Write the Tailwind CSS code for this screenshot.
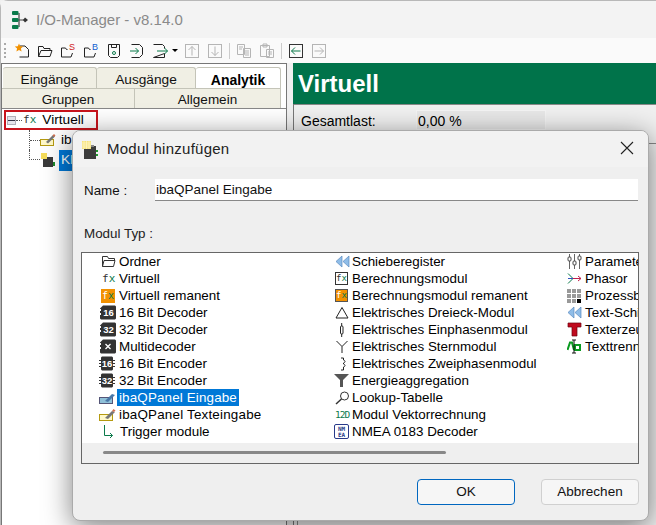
<!DOCTYPE html>
<html>
<head>
  <meta charset="UTF-8" />
  <meta name="viewport" content="width=device-width, initial-scale=1.0" />
  <script src="https://cdn.jsdelivr.net/npm/@tailwindcss/browser@4"></script>
  <title>I/O-Manager</title>
</head>
<body class="relative w-[656px] h-[525px] overflow-hidden bg-[#f0f0f0] font-['Liberation_Sans',sans-serif] text-[13.4px] text-black">

  <!-- main window -->
  <div class="h-[525px] flex flex-col border-l border-t border-[#b8b8b8] rounded-tl-lg">
    <div class="h-[37px] pt-[1px] flex items-center gap-[7px] pl-[11px] bg-[#f3f3f3]">
      <svg width="17" height="18" viewBox="0 0 17 18" fill="none">
        <path d="M7 2v14M6 9h8" stroke="#444" stroke-width="1.2"/>
        <rect x="0" y="0" width="6.500" height="4" rx="1" fill="#0b7a4b"/><rect x="0" y="7" width="6.500" height="4" rx="1" fill="#0b7a4b"/><rect x="0" y="14" width="6.500" height="4" rx="1" fill="#0b7a4b"/>
        <path d="M13 6.500l3 2.500-3 2.500-2-2.500z" fill="#333"/>
      </svg>
      <span class="text-[15px] text-[#8a8a8a]">I/O-Manager - v8.14.0</span>
    </div>

    <!-- toolbar -->
    <div class="h-[25px] flex items-center pl-[3px] gap-[7px] bg-[#fafafa]">
      <div class="h-[15px] w-[2px] border-l-2 border-dotted border-[#aaa] mr-px"></div>
      <svg width="16" height="16" viewBox="0 0 16 16" fill="none"><path d="M6 3h5l3.500 3.500V14H5.500" stroke="#222"/><path d="M5 0.500l1.200 2.800 3 .2-2.300 2 .7 3L5 7 2.400 8.500l.7-3-2.300-2 3-.2z" fill="#f29100"/></svg>
      <svg width="16" height="16" viewBox="0 0 16 16" fill="none"><path d="M1.500 13.500V3.500h4.500l1 2h6v2M1.500 13.500h11.500l2-6H4z" stroke="#222"/></svg>
      <svg width="16" height="16" viewBox="0 0 16 16" fill="none"><path d="M1.500 14V5h4l1 1.500h1M1.500 14H11l1.500-4" stroke="#222"/><text x="9" y="7" font-size="9" fill="#d01818" font-family="Liberation Sans">S</text></svg>
      <svg width="16" height="16" viewBox="0 0 16 16" fill="none"><path d="M1.500 14V5h4l1 1.500h1M1.500 14H11l1.500-4" stroke="#222"/><text x="9" y="7" font-size="9" fill="#1060d0" font-family="Liberation Sans">B</text></svg>
      <svg width="16" height="16" viewBox="0 0 16 16" fill="none"><path d="M2.500 1.500h11v11l-2 2h-7l-2-2z" stroke="#222"/><path d="M5.500 1.500v3h5v-3" stroke="#222"/><circle cx="8" cy="10" r="1.500" stroke="#0b7a4b"/></svg>
      <svg width="16" height="16" viewBox="0 0 16 16" fill="none"><path d="M2.500 1.500h8l3 3v7l-3 3h-8" stroke="#222"/><path d="M1 8h8.500M6.500 5l3 3-3 3" stroke="#0b7a4b"/></svg>
      <div class="flex items-center gap-[4px] -mr-px">
        <svg width="16" height="16" viewBox="0 0 16 16" fill="none"><path d="M1.500 1.500h9l2 2v2M12.500 10.500v4h-11z" stroke="#222"/><path d="M5 8h10.500M12.500 5l3 3-3 3" stroke="#0b7a4b"/></svg>
        <div class="w-0 h-0 border-x-[3px] border-x-transparent border-t-[3px] border-t-black"></div>
      </div>
      <svg width="16" height="16" viewBox="0 0 16 16" fill="none"><rect x="1.500" y="1.500" width="13" height="13" stroke="#b5b5b5"/><path d="M8 12.500v-9M4.500 7l3.500-3.500L11.500 7" stroke="#b5b5b5"/></svg>
      <svg width="16" height="16" viewBox="0 0 16 16" fill="none"><rect x="1.500" y="1.500" width="13" height="13" stroke="#b5b5b5"/><path d="M8 3.500v9M4.500 9L8 12.500 11.500 9" stroke="#b5b5b5"/></svg>
      <div class="w-px h-[16px] -mx-px bg-[#ccc]"></div>
      <svg width="16" height="16" viewBox="0 0 16 16" fill="none"><path d="M1.500 1.500h7v10h-7zM7.500 5.500h7v9h-7zM9 8h4M9 10h4M9 12h4M3 4h4M3 6h3" stroke="#b5b5b5"/></svg>
      <svg width="16" height="16" viewBox="0 0 16 16" fill="none"><path d="M1.500 2.500h9v11h-9zM4 1h4v3H4zM7.500 6.500h7v8h-7zM9 9h4M9 11h4" stroke="#b5b5b5"/></svg>
      <div class="w-px h-[16px] -mx-px bg-[#ccc]"></div>
      <svg width="16" height="16" viewBox="0 0 16 16" fill="none"><rect x="1.500" y="1.500" width="13" height="13" stroke="#333"/><path d="M12.500 8h-9M7 4.500L3.500 8 7 11.500" stroke="#0b7a4b"/></svg>
      <svg width="16" height="16" viewBox="0 0 16 16" fill="none"><rect x="1.500" y="1.500" width="13" height="13" stroke="#b5b5b5"/><path d="M3.500 8h9M9 4.500L12.500 8 9 11.500" stroke="#b5b5b5"/></svg>
    </div>

    <!-- panels -->
    <div class="flex-1 flex">
      <div class="w-[286px] bg-white border-l border-r border-t border-[#777]">
        <div class="w-[279px] bg-[#f0efe4]">
          <div class="h-[24px] flex pt-[3px] bg-white">
            <div class="w-[94px] ml-px pt-[4px] flex items-center justify-center bg-[#f0efe4] border-t border-r border-[#c4c4b8] rounded-t-[3px] text-[13.7px] text-[#111]">Eingänge</div>
            <div class="w-[99px] pt-[4px] flex items-center justify-center bg-[#f0efe4] border-t border-r border-[#c4c4b8] rounded-t-[3px] text-[13.7px] text-[#111]">Ausgänge</div>
            <div class="w-[85px] pt-[4px] flex items-center justify-center bg-white border-t border-r border-[#c4c4b8] rounded-t-[3px] text-[14px] font-bold">Analytik</div>
          </div>
          <div class="h-[20px] flex border-t border-[#c4c4b8]">
            <div class="w-[133px] pt-[3px] flex items-center justify-center border-r border-[#c4c4b8] text-[13.5px] text-[#111]">Gruppen</div>
            <div class="flex-1 pt-[3px] flex items-center justify-center border-r border-[#c4c4b8] text-[13.5px] text-[#111]">Allgemein</div>
          </div>
        </div>
        <div class="border-t border-[#888] w-[284px]">
          <!-- tree -->
          <div class="ml-[2px] mt-[1px] w-[94px] h-[20px] flex items-center gap-[6px] pl-[1px] border-2 border-[#c8141c]">
            <div class="flex items-center">
              <div class="w-[9px] h-[9px] bg-[#e4e4ea] border border-[#b0b0b8] flex items-center"><div class="w-[7px] h-px bg-[#334]"></div></div>
              <div class="w-[6px] border-t border-dotted border-[#555]"></div>
              <span class="ml-[1px] text-[11px] font-['DejaVu_Sans_Mono',monospace]"><span class="text-[#333]">f</span><span class="text-[#0b7a4b]">x</span></span>
            </div>
            <span class="text-[13.7px]">Virtuell</span>
          </div>
          <div class="ml-[27px] h-[20px] flex items-center">
            <div class="h-full w-[11px] flex items-center border-l border-dotted border-[#555]"><div class="w-full border-t border-dotted border-[#555]"></div></div>
            <svg width="16" height="14" viewBox="0 0 16 14" fill="none"><rect x="0.500" y="6.500" width="13" height="6" fill="#fff8c8" stroke="#b59a10"/><path d="M6 9l7-7 2 1.500-7 7z" fill="#777"/><path d="M12.500 2.500l1.500-1.500 1.500 1.500-1.500 1.500z" fill="#d07050"/></svg>
            <span class="ml-[5px] text-[13.7px]">iba</span>
          </div>
          <div class="ml-[27px] h-[20px] flex items-center">
            <div class="self-start w-[11px] h-[10px] border-l border-b border-dotted border-[#555]"></div>
            <svg width="16" height="16" viewBox="0 0 16 16"><rect x="3" y="5" width="10" height="10" fill="#3a3a3a"/><rect x="1" y="1" width="6" height="6" fill="#f5dc5a"/><rect x="13" y="10" width="2" height="4" fill="#1a8a2a"/></svg>
            <span class="ml-[3px] h-[21px] px-[2px] flex items-center bg-[#0078d7] text-white text-[13.7px]">Kl</span>
          </div>
        </div>
      </div>

      <div class="w-[6px] bg-[#f0f0f0]"></div>

      <div class="flex-1 flex flex-col border-l border-[#777]">
        <div class="h-[41px] -ml-px flex items-center pl-[5px] bg-[#00734a] text-white text-[24px] font-bold">Virtuell</div>
        <div class="h-[39px] flex items-start pt-[5px] pl-[7px] bg-[#f0f0f0] border-t border-[#888]">
          <span class="w-[115px] h-[20px] pt-[2px] flex items-center text-[14px]">Gesamtlast:</span>
          <span class="w-[130px] h-[20px] pt-[2px] pl-px flex items-center bg-[#e8e8e8] border border-[#f4f4f4] text-[14px]">0,00 %</span>
        </div>
        <div class="flex-1 ml-[3px] border-l border-t border-[#888]"></div>
      </div>
    </div>
  </div>

  <!-- dialog -->
  <div class="absolute left-[72px] top-[130px] w-[577px] h-[391px] flex flex-col bg-[#efefef] border border-[#aaa] rounded-lg shadow-[0_6px_28px_rgba(0,0,0,0.5)] overflow-hidden">
    <div class="h-[36px] pt-[1px] flex items-center pl-[8px] pr-[14px] bg-[#f2f2f2]">
      <svg width="18" height="20" viewBox="0 0 18 20">
        <rect x="3" y="6" width="12" height="13" fill="#3c3c3c"/>
        <rect x="1" y="1" width="9" height="8" fill="#f6e27a"/>
        <path d="M1 3h9M1 5h9M1 7h9M3 1v8M5.500 1v8M8 1v8" stroke="#fff7c8" stroke-width="0.700"/>
        <rect x="10" y="5" width="3" height="2" fill="#888"/>
        <rect x="15" y="10" width="2" height="2" fill="#1f9a2e"/><rect x="15" y="14" width="2" height="2" fill="#1f9a2e"/>
      </svg>
      <span class="ml-[8px] text-[15px] text-[#222] tracking-[0.25px]">Modul hinzufügen</span>
      <svg class="ml-auto -mt-[3px]" width="14" height="14" viewBox="0 0 14 14" fill="none"><path d="M1 1l12 12M13 1L1 13" stroke="#222" stroke-width="1.100"/></svg>
    </div>

    <div class="flex-1 flex flex-col pl-[8px] pr-[9px]">
      <div class="mt-[12px] h-[22px] flex items-center">
        <span class="w-[74px] pt-[2px] pl-[3px] text-[13.4px] text-[#111]">Name :</span>
        <div class="flex-1 mr-[1px] h-[22px] pt-[2px] pl-[1px] flex items-center bg-white border-b border-[#888] text-[13.5px] text-[#111]">ibaQPanel Eingabe</div>
      </div>

      <div class="mt-[26px] pl-[3px] h-[15px] flex items-center text-[13.4px] text-[#222]">Modul Typ :</div>

      <!-- module list -->
      <div class="mt-[10px] h-[212px] flex flex-col border border-[#666] bg-white overflow-hidden">
        <div class="flex-1 flex">
          <ul class="w-[234px] pl-[19px] leading-[17px]">
            <li class="h-[17px] flex items-center"><span class="w-[18px] flex justify-start"><svg width="15" height="13" viewBox="0 0 15 13" fill="none"><path d="M1.500 11.500V1.500h5l1 2h6v2M1.500 11.500h11l1.500-6H3z" stroke="#333"/></svg></span><span>Ordner</span></li>
            <li class="h-[17px] flex items-center"><span class="w-[18px] text-[11px] font-['DejaVu_Sans_Mono',monospace] pl-[1px]"><span class="text-[#333]">f</span><span class="text-[#0b7a4b]">x</span></span><span>Virtuell</span></li>
            <li class="h-[17px] flex items-center"><span class="w-[18px]"><span class="w-[14px] h-[14px] flex items-center justify-center bg-[#f29100] text-[10px] font-['DejaVu_Sans_Mono',monospace]"><span class="text-white">f</span><span class="text-[#0b7a4b]">x</span></span></span><span>Virtuell remanent</span></li>
            <li class="h-[17px] flex items-center"><span class="w-[18px]"><svg class="-ml-px" width="16" height="15" viewBox="0 0 16 15"><path d="M3 0.500h12l1 1v12l-1 1H1l-1-1V10h1V8H0V6h1V4H0V3.500z" fill="#333"/><text x="8.500" y="11" text-anchor="middle" font-size="9.500" font-weight="bold" fill="#fff" font-family="Liberation Sans">16</text></svg></span><span>16 Bit Decoder</span></li>
            <li class="h-[17px] flex items-center"><span class="w-[18px]"><svg class="-ml-px" width="16" height="15" viewBox="0 0 16 15"><path d="M3 0.500h12l1 1v12l-1 1H1l-1-1V10h1V8H0V6h1V4H0V3.500z" fill="#333"/><text x="8.500" y="11" text-anchor="middle" font-size="9.500" font-weight="bold" fill="#fff" font-family="Liberation Sans">32</text></svg></span><span>32 Bit Decoder</span></li>
            <li class="h-[17px] flex items-center"><span class="w-[18px]"><svg class="-ml-px" width="16" height="15" viewBox="0 0 16 15" fill="none"><path d="M3 0.500h12l1 1v12l-1 1H1l-1-1V10h1V8H0V6h1V4H0V3.500z" fill="#333"/><path d="M5.500 5l5 5M10.500 5l-5 5" stroke="#fff" stroke-width="1.300"/></svg></span><span>Multidecoder</span></li>
            <li class="h-[17px] flex items-center"><span class="w-[18px]"><svg class="-ml-[2px]" width="16" height="15" viewBox="0 0 16 15"><path d="M3 0.500h10l1 1V4h2v1h-2v2h2v1h-2v2h2v1h-2v2.500l-1 1H3l-1-1V11H0v-1h2V8H0V7h2V5H0V4h2V1.500z" fill="#333"/><text x="8" y="11" text-anchor="middle" font-size="9.500" font-weight="bold" fill="#fff" font-family="Liberation Sans">16</text></svg></span><span>16 Bit Encoder</span></li>
            <li class="h-[17px] flex items-center"><span class="w-[18px]"><svg class="-ml-[2px]" width="16" height="15" viewBox="0 0 16 15"><path d="M3 0.500h10l1 1V4h2v1h-2v2h2v1h-2v2h2v1h-2v2.500l-1 1H3l-1-1V11H0v-1h2V8H0V7h2V5H0V4h2V1.500z" fill="#333"/><text x="8" y="11" text-anchor="middle" font-size="9.500" font-weight="bold" fill="#fff" font-family="Liberation Sans">32</text></svg></span><span>32 Bit Encoder</span></li>
            <li class="h-[17px] flex items-center"><span class="w-[16px]"><svg class="-ml-[2px]" width="17" height="14" viewBox="0 0 17 14" fill="none"><rect x="0.500" y="6.500" width="13" height="6" fill="#8fc0d8" stroke="#557"/><path d="M6 10l7-7 3 1-7 7z" fill="#4a78a8"/></svg></span><span class="h-[17px] pl-[2px] pr-[2px] flex items-center bg-[#0078d7] text-white tracking-[0.15px]">ibaQPanel Eingabe</span></li>
            <li class="h-[17px] flex items-center"><span class="w-[18px]"><svg class="-ml-[2px]" width="17" height="14" viewBox="0 0 17 14" fill="none"><rect x="0.500" y="6.500" width="13" height="6" fill="#fff8c8" stroke="#b59a10"/><path d="M6 10l7-7 3 1-7 7z" fill="#777"/><path d="M13 3l1.500-2 2 1.500-1.500 1.500z" fill="#d07050"/></svg></span><span class="tracking-[0.2px]">ibaQPanel Texteingabe</span></li>
            <li class="h-[17px] flex items-center"><span class="w-[19px]"><svg class="ml-[1px]" width="13" height="13" viewBox="0 0 13 13" fill="none"><path d="M2.500 0v10.500h8M8 8l2.500 2.500L8 13" stroke="#0b7a4b"/></svg></span><span>Trigger module</span></li>
          </ul>

          <ul class="w-[248px] pl-[19px] leading-[17px]">
            <li class="h-[17px] flex items-center"><span class="w-[17px]"><svg width="15" height="13" viewBox="0 0 15 13"><path d="M7 1L1 6.500 7 12z" fill="#8fbde8" stroke="#5a8abf" stroke-width="0.700"/><path d="M14 1L8 6.500 14 12z" fill="#8fbde8" stroke="#5a8abf" stroke-width="0.700"/></svg></span><span>Schieberegister</span></li>
            <li class="h-[17px] flex items-center"><span class="w-[17px]"><span class="w-[13px] h-[13px] flex items-center justify-center border border-[#333] text-[9px] font-['DejaVu_Sans_Mono',monospace]"><span class="text-[#333]">f</span><span class="text-[#0b7a4b]">x</span></span></span><span>Berechnungsmodul</span></li>
            <li class="h-[17px] flex items-center"><span class="w-[17px]"><span class="w-[13px] h-[13px] flex items-center justify-center bg-[#f29100] border border-[#555] text-[9px] font-['DejaVu_Sans_Mono',monospace]"><span class="text-white">f</span><span class="text-[#0b7a4b]">x</span></span></span><span>Berechnungsmodul remanent</span></li>
            <li class="h-[17px] flex items-center"><span class="w-[17px]"><svg width="14" height="13" viewBox="0 0 14 13" fill="none"><path d="M7 1.500l6 10.500H1z" stroke="#222"/></svg></span><span>Elektrisches Dreieck-Modul</span></li>
            <li class="h-[17px] flex items-center"><span class="w-[17px]"><svg width="14" height="14" viewBox="0 0 14 14" fill="none"><rect x="5.500" y="3" width="2.500" height="8" rx="1" stroke="#222"/><path d="M6.700 0v3M6.700 11v3" stroke="#222"/></svg></span><span>Elektrisches Einphasenmodul</span></li>
            <li class="h-[17px] flex items-center"><span class="w-[17px]"><svg width="14" height="13" viewBox="0 0 14 13" fill="none"><path d="M1.500 1L7 6.500 12.500 1M7 6.500V13" stroke="#222"/></svg></span><span>Elektrisches Sternmodul</span></li>
            <li class="h-[17px] flex items-center"><span class="w-[17px]"><svg width="14" height="14" viewBox="0 0 14 14" fill="none"><path d="M6 1h2.500v2c2 .5 2 2.500 0 3v1c2 .5 2 2.500 0 3v3H6" stroke="#222"/></svg></span><span>Elektrisches Zweiphasenmodul</span></li>
            <li class="h-[17px] flex items-center"><span class="w-[17px]"><svg class="-ml-px" width="15" height="13" viewBox="0 0 15 13"><path d="M0 0h15L9 6v7H6V6z" fill="#555"/></svg></span><span>Energieaggregation</span></li>
            <li class="h-[17px] flex items-center"><span class="w-[17px]"><svg width="15" height="14" viewBox="0 0 15 14" fill="none"><circle cx="9.500" cy="5" r="4" stroke="#333"/><path d="M6.500 8L1 13" stroke="#333" stroke-width="1.500"/></svg></span><span>Lookup-Tabelle</span></li>
            <li class="h-[17px] flex items-center"><span class="w-[17px] text-[9.500px] text-[#0b7a4b] font-['DejaVu_Sans_Mono',monospace] tracking-[-1px]">12D</span><span>Modul Vektorrechnung</span></li>
            <li class="h-[17px] flex items-center"><span class="w-[17px]"><span class="w-[15px] h-[15px] -ml-px flex flex-col items-center justify-center border border-[#283a8a] rounded-[2px] text-[#283a8a] text-[6px] leading-[6px] font-bold font-['DejaVu_Sans_Mono',monospace]"><span>NM</span><span>EA</span></span></span><span>NMEA 0183 Decoder</span></li>
          </ul>

          <ul class="flex-1 min-w-0 overflow-hidden pl-[3px] leading-[17px] whitespace-nowrap">
            <li class="h-[17px] flex items-center"><span class="w-[18px] shrink-0"><svg width="15" height="15" viewBox="0 0 15 15" fill="none"><path d="M2.500 0v15M7.500 0v15M12.500 0v15" stroke="#666"/><rect x="1" y="3" width="3" height="4" rx="1" fill="#fff" stroke="#444"/><rect x="6" y="7" width="3" height="4" rx="1" fill="#fff" stroke="#444"/><rect x="11" y="2" width="3" height="4" rx="1" fill="#fff" stroke="#444"/></svg></span><span>Parameter</span></li>
            <li class="h-[17px] flex items-center"><span class="w-[18px] shrink-0"><svg width="15" height="13" viewBox="0 0 15 13" fill="none"><path d="M1 1.500l5 5-5 5" stroke="#0b7a4b"/><path d="M1 6.500h5" stroke="#3050c0"/><path d="M6 6.500h8M11 4l3 2.500-3 2.500" stroke="#c0204a"/></svg></span><span>Phasor</span></li>
            <li class="h-[17px] flex items-center"><span class="w-[18px] shrink-0"><span class="w-[14px] h-[14px] grid grid-cols-3 gap-px"><i class="bg-[#999]"></i><i class="bg-[#999]"></i><i class="bg-[#999]"></i><i class="bg-[#999]"></i><i class="bg-[#999]"></i><i class="bg-[#999]"></i><i class="bg-[#999]"></i><i class="bg-[#999]"></i><i class="bg-black"></i></span></span><span>Prozessbild</span></li>
            <li class="h-[17px] flex items-center"><span class="w-[18px] shrink-0"><svg width="15" height="13" viewBox="0 0 15 13"><path d="M7 1L1 6.500 7 12z" fill="#8fbde8" stroke="#5a8abf" stroke-width="0.700"/><path d="M14 1L8 6.500 14 12z" fill="#8fbde8" stroke="#5a8abf" stroke-width="0.700"/></svg></span><span>Text-Schieberegister</span></li>
            <li class="h-[17px] flex items-center"><span class="w-[18px] shrink-0"><svg width="15" height="15" viewBox="0 0 15 15"><path d="M1 1h13v4h-4v9H5V5H1z" fill="#c00a1e" stroke="#6a0510" stroke-width="0.700"/></svg></span><span>Texterzeuger</span></li>
            <li class="h-[17px] flex items-center"><span class="w-[18px] shrink-0"><svg width="15" height="15" viewBox="0 0 15 15" fill="none"><path d="M0.500 11L3 3.500h2L7 11" stroke="#0a9a20" stroke-width="2"/><path d="M8 6h5v5H8z" stroke="#0a9a20" stroke-width="2"/><path d="M7 1v13M5 1h4M5 14h4" stroke="#111"/></svg></span><span>Texttrennung</span></li>
          </ul>
        </div>
        <!-- horizontal scrollbar -->
        <div class="h-[20px] pt-[8px] pl-[21px] bg-[#efefef]"><div class="w-[343px] h-[3px] bg-[#888] rounded-full"></div></div>
      </div>

      <div class="mt-[15px] flex justify-end gap-[26px]">
        <button class="w-[98px] h-[26px] bg-[#f6f6f6] border border-[#0067c0] rounded-[4px] text-[13.5px] text-[#111]">OK</button>
        <button class="w-[98px] h-[26px] bg-[#f6f6f6] border border-[#d0d0d0] rounded-[4px] text-[13.5px] text-[#111]">Abbrechen</button>
      </div>
    </div>
  </div>
</body>
</html>
